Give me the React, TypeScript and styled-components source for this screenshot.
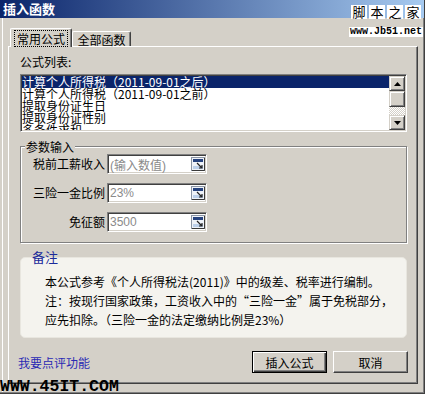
import styled, { createGlobalStyle } from "styled-components";

const GlobalStyle = createGlobalStyle`
  body {
    margin: 0;
    background: #fff;
    font-family: "Noto Sans CJK SC", "Noto Sans", sans-serif;
    font-size: 12px;
    color: #000;
  }
`;

const Page = styled.div`
  position: relative;
  width: 428px;
  height: 395px;
  overflow: hidden;
  background: #fff;
`;

const Window = styled.div`
  width: 425px;
  height: 394px;
  box-sizing: border-box;
  background: #d4d0c8;
  border-right: 1px solid #404040;
  border-bottom: 1px solid #404040;
  box-shadow: inset -1px -1px 0 #808080, inset 2px 0 0 #d4d0c8,
    inset 3px 0 0 #fff;
  display: flex;
  flex-direction: column;
`;

const TitleBar = styled.div`
  height: 18px;
  line-height: 18px;
  padding-left: 3px;
  background: linear-gradient(to right, #0a246a, #a6caf0);
  color: #fff;
  font-weight: bold;
  font-size: 13px;
`;

const Body = styled.div`
  flex: 1;
  padding: 8px 6px 9px 8px;
  display: flex;
  flex-direction: column;
`;

const TabStrip = styled.div`
  height: 20px;
  display: flex;
  align-items: flex-end;
  padding-left: 2px;
  position: relative;
  z-index: 1;
`;

const Tab = styled.div<{ $active?: boolean }>`
  box-sizing: border-box;
  height: ${(p) => (p.$active ? "19px" : "15px")};
  width: ${(p) => (p.$active ? "62px" : "59px")};
  margin-bottom: ${(p) => (p.$active ? "-1px" : "0")};
  background: #d4d0c8;
  border-top: 1px solid #fff;
  border-left: 1px solid #fff;
  border-right: 1px solid #404040;
  border-radius: 2px 2px 0 0;
  box-shadow: inset -1px 0 0 #808080;
  display: flex;
  align-items: center;
  justify-content: center;
  line-height: 13px;
`;

const FocusLabel = styled.span`
  outline: 1px dotted #000;
  padding: 1px 2px;
`;

const Panel = styled.div`
  height: 338px;
  box-sizing: border-box;
  border-top: 1px solid #fff;
  border-left: 1px solid #fff;
  border-right: 1px solid #404040;
  border-bottom: 1px solid #404040;
  box-shadow: inset -1px -1px 0 #808080;
  padding: 8px 10px 10px 11px;
  display: flex;
  flex-direction: column;
`;

const SectionLabel = styled.div`
  line-height: 14px;
  margin-bottom: 5px;
`;

const ListBox = styled.div`
  height: 58px;
  box-sizing: border-box;
  border: 1px solid;
  border-color: #808080 #fff #fff #808080;
  box-shadow: inset 1px 1px 0 #404040, inset -1px -1px 0 #d4d0c8;
  padding: 1px;
  background: #fff;
  display: flex;
`;

const Rows = styled.div`
  flex: 1;
  overflow: hidden;
`;

const Row = styled.div<{ $selected?: boolean }>`
  height: 12px;
  line-height: 12px;
  white-space: nowrap;
  background: ${(p) => (p.$selected ? "#0a246a" : "transparent")};
  color: ${(p) => (p.$selected ? "#fff" : "#000")};
`;

const ScrollBar = styled.div`
  width: 16px;
  display: flex;
  flex-direction: column;
`;

const Raised = styled.div<{ $h: number }>`
  height: ${(p) => p.$h}px;
  box-sizing: border-box;
  background: #d4d0c8;
  border: 1px solid;
  border-color: #d4d0c8 #404040 #404040 #d4d0c8;
  box-shadow: inset 1px 1px 0 #fff, inset -1px -1px 0 #808080;
  display: flex;
  align-items: center;
  justify-content: center;
`;

const Track = styled.div`
  flex: 1;
  background-color: #fff;
  background-image: repeating-conic-gradient(#d4d0c8 0 25%, #fff 0 50%);
  background-size: 2px 2px;
`;

const Group = styled.fieldset`
  margin: 8px 0 0;
  padding: 1px 0 10px;
  min-width: 0;
  border: 1px solid #808080;
  box-shadow: inset 1px 1px 0 #fff, 1px 1px 0 #fff;
`;

const Legend = styled.legend`
  margin-left: 4px;
  padding: 0 1px;
  line-height: 13px;
  position: relative;
  background: #d4d0c8;
`;

const FieldGrid = styled.div`
  display: grid;
  grid-template-columns: 84px 100px;
  column-gap: 2px;
  row-gap: 9px;
  align-items: center;
`;

const FieldLabel = styled.div`
  text-align: right;
  line-height: 20px;
  white-space: nowrap;
`;

const Field = styled.div`
  width: 100px;
  height: 20px;
  box-sizing: border-box;
  border: 1px solid;
  border-color: #808080 #fff #fff #808080;
  box-shadow: inset 1px 1px 0 #404040, inset -1px -1px 0 #d4d0c8;
  background: #fff;
  display: flex;
  align-items: center;
  padding: 0 1px 0 2px;
  color: #8a8a8a;
  font-family: "Liberation Sans", "Noto Sans CJK SC", sans-serif;
  font-size: 12px;
`;

const FieldValue = styled.span`
  flex: 1;
  white-space: nowrap;
`;

const NotesTitle = styled.div`
  margin: 7px 0 0 12px;
  line-height: 14px;
  font-size: 13px;
  color: #1a2a9a;
  position: relative;
  z-index: 1;
`;

const NotesBox = styled.div`
  margin-top: -7px;
  height: 81px;
  box-sizing: border-box;
  background: #f4f3ee;
  border: 1px solid #e8e6df;
  border-radius: 5px;
  padding: 14px 0 0 24px;
  line-height: 19px;
  white-space: nowrap;
`;

const Footer = styled.div`
  margin: 13px -1px 0 0;
  height: 22px;
  display: flex;
  align-items: center;
  gap: 6px;
`;

const Link = styled.span`
  flex: 1;
  margin-left: -2px;
  color: #2a2ab4;
`;

const Button = styled.button<{ $default?: boolean }>`
  width: 75px;
  height: 22px;
  box-sizing: border-box;
  padding: 0;
  font-family: inherit;
  font-size: 12px;
  color: #000;
  background: #d4d0c8;
  border: 1px solid;
  border-color: ${(p) =>
    p.$default ? "#000" : "#fff #404040 #404040 #fff"};
  box-shadow: ${(p) =>
    p.$default
      ? "inset 1px 1px 0 #fff, inset -1px -1px 0 #404040, inset -2px -2px 0 #808080"
      : "inset -1px -1px 0 #808080"};
`;

const BrandChars = styled.div`
  position: absolute;
  top: 5px;
  left: 351px;
  display: flex;
  gap: 2px;
`;

const BrandChar = styled.span`
  width: 16px;
  height: 14px;
  line-height: 14px;
  text-align: center;
  background: #fff;
  font-size: 13px;
  color: #000;
`;

const BrandUrl = styled.div`
  position: absolute;
  top: 27px;
  left: 349px;
  padding: 0 1px;
  background: #fff;
  font-family: "Liberation Mono", monospace;
  font-weight: bold;
  font-size: 10px;
  line-height: 10px;
  color: #000;
`;

const SiteMark = styled.div`
  position: absolute;
  left: 0;
  top: 379px;
  font-family: "Liberation Mono", monospace;
  font-weight: bold;
  font-size: 16.5px;
  line-height: 16px;
  color: #000;
`;

const Arrow = ({ down }: { down?: boolean }) => (
  <svg width="7" height="4" viewBox="0 0 7 4">
    <polygon
      points={down ? "0,0 7,0 3.5,4" : "3.5,0 7,4 0,4"}
      fill="#000"
    />
  </svg>
);

const RefIcon = () => (
  <svg width="14" height="14" viewBox="0 0 14 14">
    <rect x="0.5" y="0.5" width="13" height="13" fill="#eef2f8" stroke="#8a94a4" />
    <rect x="2" y="2" width="10" height="3" fill="#25427e" />
    <rect x="2" y="9" width="10" height="3" fill="#bcd0ea" />
    <path d="M13.5 1v12.5H1" fill="none" stroke="#3a3a3a" />
    <path d="M6 6l5 5M8 11h3V8" fill="none" stroke="#222" strokeWidth="1.2" />
  </svg>
);

const fields = [
  { label: "税前工薪收入", value: "(输入数值)" },
  { label: "三险一金比例", value: "23%" },
  { label: "免征额", value: "3500" },
];

const formulas = [
  "计算个人所得税（2011-09-01之后）",
  "计算个人所得税（2011-09-01之前）",
  "提取身份证生日",
  "提取身份证性别",
  "多条件求和",
];

export default function App() {
  return (
    <Page>
      <GlobalStyle />
      <Window>
        <TitleBar>插入函数</TitleBar>
        <Body>
          <TabStrip>
            <Tab $active>
              <FocusLabel>常用公式</FocusLabel>
            </Tab>
            <Tab>全部函数</Tab>
          </TabStrip>
          <Panel>
            <SectionLabel>公式列表:</SectionLabel>
            <ListBox>
              <Rows>
                {formulas.map((f, i) => (
                  <Row key={f} $selected={i === 0}>
                    {f}
                  </Row>
                ))}
              </Rows>
              <ScrollBar>
                <Raised $h={15}>
                  <Arrow />
                </Raised>
                <Raised $h={16} />
                <Track />
                <Raised $h={15}>
                  <Arrow down />
                </Raised>
              </ScrollBar>
            </ListBox>

            <Group>
              <Legend>参数输入</Legend>
              <FieldGrid>
                {fields.map((f) => (
                  <>
                    <FieldLabel key={f.label}>{f.label}</FieldLabel>
                    <Field key={f.value}>
                      <FieldValue>{f.value}</FieldValue>
                      <RefIcon />
                    </Field>
                  </>
                ))}
              </FieldGrid>
            </Group>

            <NotesTitle>备注</NotesTitle>
            <NotesBox>
              <div>本公式参考《个人所得税法(2011)》中的级差、税率进行编制。</div>
              <div>注：按现行国家政策，工资收入中的“三险一金”属于免税部分，</div>
              <div>应先扣除。（三险一金的法定缴纳比例是23%）</div>
            </NotesBox>

            <Footer>
              <Link>我要点评功能</Link>
              <Button $default>插入公式</Button>
              <Button>取消</Button>
            </Footer>
          </Panel>
        </Body>
      </Window>

      <BrandChars>
        {"脚本之家".split("").map((c) => (
          <BrandChar key={c}>{c}</BrandChar>
        ))}
      </BrandChars>
      <BrandUrl>www.Jb51.net</BrandUrl>
      <SiteMark>WWW.45IT.COM</SiteMark>
    </Page>
  );
}
